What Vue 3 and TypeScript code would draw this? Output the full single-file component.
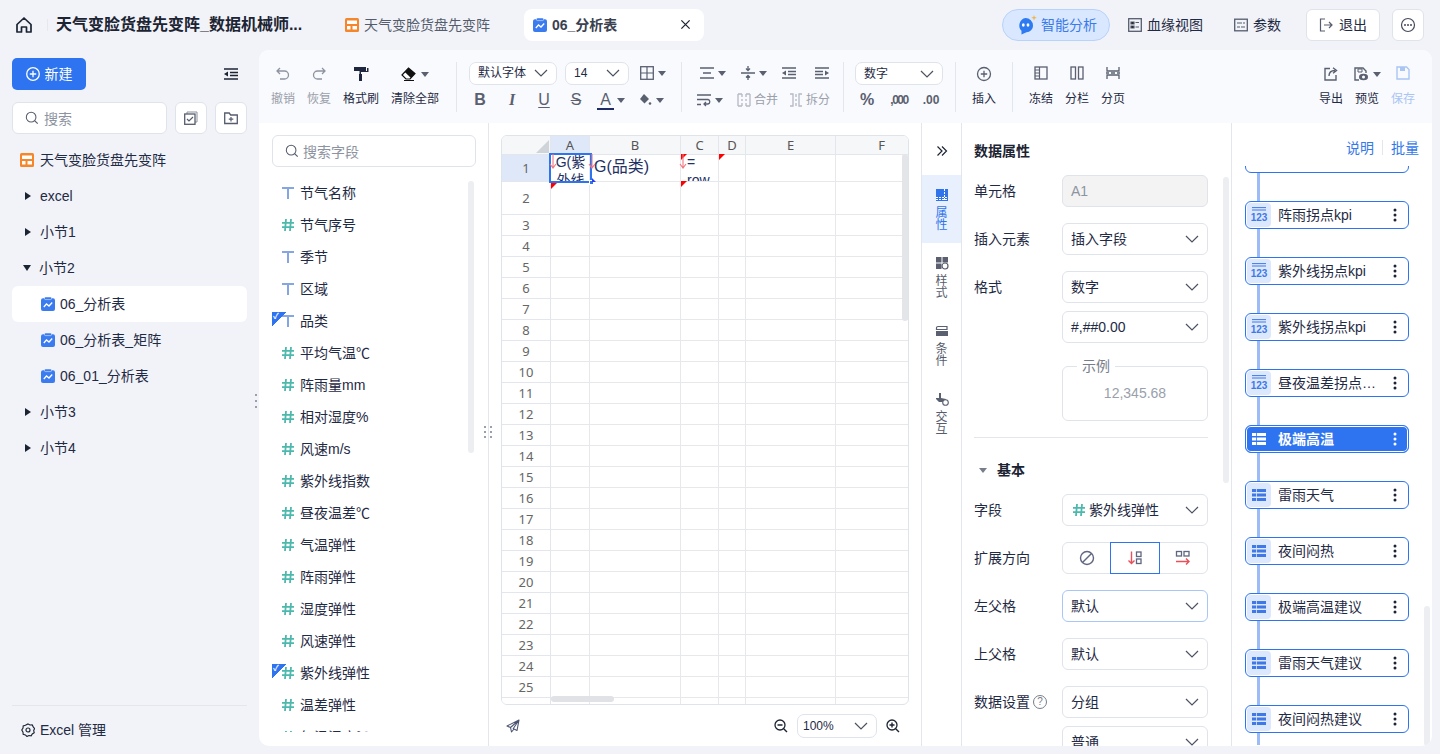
<template>
  <div class="page">
    <!-- hidden icon sprite -->
    <svg class="sprite" aria-hidden="true">
      <symbol id="i-chev" viewBox="0 0 16 16"><path d="M2 5l6 6 6-6" fill="none" stroke="currentColor" stroke-width="1.200" /></symbol>
      <symbol id="i-search" viewBox="0 0 16 16"><circle cx="7" cy="7" r="5.500" fill="none" stroke="currentColor" stroke-width="1.200" /><path d="M11 11l3.500 3.500" stroke="currentColor" stroke-width="1.400" /></symbol>
      <symbol id="i-dash" viewBox="0 0 14 14"><rect width="14" height="14" rx="1.500" fill="#f5862a" /><path d="M2 2.500h10v3.500H2zM2 8h3.500v3.500H2zM7.500 8H12v3.500H7.500z" fill="#fff" /></symbol>
      <symbol id="i-report" viewBox="0 0 14 14"><rect x="0" y="1.200" width="14" height="12.800" rx="2" fill="#3a7bf0" /><rect x="3.500" y="0" width="7" height="2.600" rx="1" fill="#3a7bf0" stroke="#fff" stroke-width=".5" /><path d="M2.800 10l2.700-3 2.500 2 3.200-3.500" fill="none" stroke="#fff" stroke-width="1.300" /></symbol>
      <symbol id="i-table" viewBox="0 0 16 16"><path d="M1 2h14v3H1zM1 6.500h14v3H1zM1 11h14v3H1z" fill="currentColor" /><path d="M5.500 2v12" stroke="var(--gap)" stroke-width=".8" /></symbol>
      <symbol id="i-cal" viewBox="0 0 14 4"><path d="M0 .6h14M0 3h14" stroke="currentColor" stroke-width="1" /></symbol>
      <symbol id="i-num" viewBox="0 0 12 12"><path d="M4 0L3 12M9 0L8 12M0 3.800h12M0 8.200h12" stroke="#4db8ac" stroke-width="1.800" fill="none" /></symbol>
      <symbol id="i-text" viewBox="0 0 12 12"><path d="M0 1h12M6 1v11" stroke="#86a5e3" stroke-width="2" fill="none" /></symbol>
    </svg>

    <header class="topbar">
      <svg class="home" viewBox="0 0 18 18"><path d="M2 8.500L9 2l7 6.500V16h-4.500v-5h-5v5H2z" fill="none" stroke="#1c2433" stroke-width="1.700" stroke-linejoin="round" /></svg>
      <span class="top-sep"></span>
      <div class="doc-title">天气变脸货盘先变阵_数据机械师...</div>
      <div class="tab">
        <svg class="ic14"><use href="#i-dash" /></svg>
        <span>天气变脸货盘先变阵</span>
      </div>
      <div class="tab tab-on">
        <svg class="ic14"><use href="#i-report" /></svg>
        <b>06_分析表</b>
        <svg class="tab-x" viewBox="0 0 12 12"><path d="M1.500 1.500l9 9M10.500 1.500l-9 9" stroke="#1c2433" stroke-width="1.400" /></svg>
      </div>
      <div class="top-right">
        <div class="ai-pill">
          <svg class="ai-ic" viewBox="0 0 20 20"><path d="M8.500 3a7.500 7.500 0 0 1 7.500 7.500c0 3.800-3 6.700-6.500 6.700L4.500 19.500v-3.800A7.500 7.500 0 0 1 8.500 3z" fill="#2e7af0" /><ellipse cx="6.300" cy="10" rx="1.400" ry="1.700" fill="#fff" /><ellipse cx="11" cy="10" rx="1.400" ry="1.700" fill="#fff" /><path d="M17 0l.7 2L19.800 2.800l-2.100.7L17 5.600l-.7-2.100-2.100-.7 2.100-.8z" fill="#f5b342" /></svg>
          <span>智能分析</span>
        </div>
        <div class="top-link link-a">
          <svg class="ic14" viewBox="0 0 14 14"><rect x=".7" y=".7" width="12.600" height="12.600" fill="none" stroke="#555c6c" stroke-width="1.300" /><path d="M3 4h3v2H3zM3 8h3v2H3zM7.500 4.500H11M7.500 9H11" stroke="#555c6c" stroke-width="1.200" /></svg>
          <span>血缘视图</span>
        </div>
        <div class="top-link link-b">
          <svg class="ic14" viewBox="0 0 14 14"><rect x=".7" y="1.200" width="12.600" height="11.600" fill="none" stroke="#555c6c" stroke-width="1.300" /><path d="M3 5h5M3 9h3M9 5h2M7 9h4" stroke="#555c6c" stroke-width="1.200" /></svg>
          <span>参数</span>
        </div>
        <button class="exit">
          <svg class="ic14" viewBox="0 0 14 14"><path d="M6 1H1.500v12H6M5 7h8M10 4l3 3-3 3" fill="none" stroke="#555c6c" stroke-width="1.200" /></svg>
          退出
        </button>
        <button class="more">
          <svg viewBox="0 0 16 16" class="ic16"><circle cx="8" cy="8" r="6.500" fill="none" stroke="#444b5a" stroke-width="1.200" /><circle cx="5" cy="8" r="1" fill="#444b5a" /><circle cx="8" cy="8" r="1" fill="#444b5a" /><circle cx="11" cy="8" r="1" fill="#444b5a" /></svg>
        </button>
      </div>
    </header>

    <div class="body">
      <aside class="side">
        <div class="side-head">
          <button class="new-btn">
            <svg viewBox="1 1 14 14" class="ic14"><circle cx="8" cy="8" r="6.300" fill="none" stroke="#fff" stroke-width="1.300" /><path d="M8 4.800v6.400M4.800 8h6.400" stroke="#fff" stroke-width="1.300" /></svg>
            新建
          </button>
          <svg class="collapse" viewBox="0 0 14 12"><path d="M0 1h14M6 4.500h8M6 7.500h8M0 11h14" stroke="#1c2433" stroke-width="1.400" /><path d="M4 3.500v5L0 6z" fill="#1c2433" /></svg>
        </div>
        <div class="side-search">
          <div class="search-box">
            <svg class="ic14 grey"><use href="#i-search" /></svg>
            <span>搜索</span>
          </div>
          <button class="square">
            <svg viewBox="0 0 14 14" class="ic14"><path d="M3 3V1h10v10h-2" fill="none" stroke="#8a909c" stroke-width="1" /><rect x=".7" y="3" width="10.300" height="10.300" fill="none" stroke="#555c6c" stroke-width="1.300" /><path d="M3 8l2 2 4-4" fill="none" stroke="#555c6c" stroke-width="1.200" /></svg>
          </button>
          <button class="square">
            <svg viewBox="0 0 14 14" class="ic14"><path d="M.7 2h4.500l1.500 2h6.600v8.500H.7z" fill="none" stroke="#555c6c" stroke-width="1.300" /><path d="M7 6v4.500M4.800 8.200h4.500" stroke="#555c6c" stroke-width="1.200" /></svg>
          </button>
        </div>
        <div class="tree">
          <div class="tree-row root">
            <svg class="ic14"><use href="#i-dash" /></svg>
            <span>天气变脸货盘先变阵</span>
          </div>
          <template v-for="row in navRows" :key="row.label">
            <div v-if="row.report" class="tree-row leaf" :class="{ active: row.active }">
              <svg class="ic14"><use href="#i-report" /></svg>
              <span>{{ row.label }}</span>
            </div>
            <div v-else class="tree-row folder">
              <i class="caret" :class="{ open: row.open }"></i>
              <span>{{ row.label }}</span>
            </div>
          </template>
        </div>
        <div class="side-foot">
          <svg viewBox="0 0 16 16" class="ic14"><path d="M8 1l2.200 1.300 2.600-.1 1.200 2.200 1.500 2-1 2.300.6 2.400-2.200 1.400-1.300 2.200-2.600-.4-2.200 1.100-1.800-1.800-2.500-.6-.2-2.600L.9 8l1.400-2.100.2-2.600L5 2.600z" fill="none" stroke="#1c2433" stroke-width="1.300" /><circle cx="8" cy="8" r="2.300" fill="none" stroke="#1c2433" stroke-width="1.300" /></svg>
          <span>Excel 管理</span>
        </div>
        <div class="side-grip"></div>
      </aside>

      <main class="card">
        <div class="toolbar">
          <div class="tb-group g-history">
            <div class="tool off">
              <svg class="ic16" viewBox="0 0 16 16"><path d="M5 2L2 5l3 3M2 5h7.500a4 4 0 0 1 0 8H5" fill="none" stroke="#8d93a0" stroke-width="1.300" /></svg>
              <span>撤销</span>
            </div>
            <div class="tool off">
              <svg class="ic16" viewBox="0 0 16 16"><path d="M11 2l3 3-3 3M14 5H6.500a4 4 0 0 0 0 8H11" fill="none" stroke="#8d93a0" stroke-width="1.300" /></svg>
              <span>恢复</span>
            </div>
            <div class="tool">
              <svg class="ic16" viewBox="0 0 16 16"><path d="M1 1h12v4H1zM14 2h1.500v4H8v2H6.500V5h7.500z" fill="#1f2740" /><path d="M6 8h3v7H6z" fill="#1f2740" /></svg>
              <span>格式刷</span>
            </div>
            <div class="tool wide">
              <div class="with-caret">
                <svg class="ic16" viewBox="0 0 16 16"><path d="M1 9l6.500-7L14 7.500 9 13H5z" fill="#fff" stroke="#111" stroke-width="1.200" /><path d="M7.500 2L14 7.500 10 12 3.800 6z" fill="#111" /><path d="M3 14.500h10" stroke="#111" stroke-width="1" /></svg>
                <i class="mini-caret"></i>
              </div>
              <span>清除全部</span>
            </div>
          </div>
          <span class="tb-sep"></span>

          <div class="tb-group g-font">
            <div class="fmt-top">
              <div class="select s-font"><span>默认字体</span><svg class="chev"><use href="#i-chev" /></svg></div>
              <div class="select s-size"><span>14</span><svg class="chev"><use href="#i-chev" /></svg></div>
              <div class="with-caret">
                <svg class="ic14" viewBox="0 0 14 14"><rect x=".7" y=".7" width="12.600" height="12.600" fill="none" stroke="#5a6070" stroke-width="1.300" /><path d="M7 1v12M1 7h12" stroke="#5a6070" stroke-width="1.200" /></svg>
                <i class="mini-caret"></i>
              </div>
            </div>
            <div class="fmt-bottom">
              <span class="glyph bold">B</span>
              <span class="glyph ital">I</span>
              <span class="glyph under">U</span>
              <span class="glyph strike">S</span>
              <div class="with-caret color-a"><span class="glyph a-line">A</span><i class="mini-caret"></i></div>
              <div class="with-caret color-f">
                <svg class="ic14" viewBox="0 0 14 14"><path d="M6 1l5 5-4.500 4.500L2 6z" fill="#5a6070" /><circle cx="12" cy="10.500" r="1.300" fill="#5a6070" /></svg>
                <i class="mini-caret"></i>
              </div>
            </div>
          </div>
          <span class="tb-sep"></span>

          <div class="tb-group g-align">
            <div class="fmt-top align-top">
              <div class="with-caret">
                <svg class="ic14" viewBox="0 0 14 12"><path d="M0 1h14M3 6h8M0 11h14" stroke="#5a6070" stroke-width="1.400" /></svg>
                <i class="mini-caret"></i>
              </div>
              <div class="with-caret">
                <svg class="ic14" viewBox="0 0 14 14"><path d="M0 7h14M7 0v4M7 10v4M5 2.500L7 4.500l2-2M5 11.500l2-2 2 2" fill="none" stroke="#5a6070" stroke-width="1.300" /></svg>
                <i class="mini-caret"></i>
              </div>
              <svg class="ic14" viewBox="0 0 14 12"><path d="M0 1h14M6 4.500h8M6 7.500h8M0 11h14" stroke="#5a6070" stroke-width="1.300" /><path d="M4 3.500v5L0 6z" fill="#5a6070" /></svg>
              <svg class="ic14" viewBox="0 0 14 12"><path d="M0 1h14M0 4.500h8M0 7.500h8M0 11h14" stroke="#5a6070" stroke-width="1.300" /><path d="M10 3.500v5L14 6z" fill="#5a6070" /></svg>
            </div>
            <div class="fmt-bottom align-bottom">
              <div class="with-caret">
                <svg class="ic14" viewBox="0 0 14 12"><path d="M0 1h14M0 5.500h11a2.300 2.300 0 0 1 0 4.500H7M9 8l-2 2 2 2M0 10.500h4" fill="none" stroke="#5a6070" stroke-width="1.300" /></svg>
                <i class="mini-caret"></i>
              </div>
              <div class="inline-tool">
                <svg class="ic14" viewBox="0 0 14 14"><path d="M1 1h4M9 1h4M1 13h4M9 13h4M1 1v12M13 1v12M5 1v3M5 6v2M5 10v3M9 1v3M9 6v2M9 10v3" fill="none" stroke="#b4b9c3" stroke-width="1.300" /></svg>
                <span>合并</span>
              </div>
              <div class="inline-tool">
                <svg class="ic14" viewBox="0 0 14 14"><path d="M1 1h3v12H1M13 1h-3v12h3M7 1v3M7 6v2M7 10v3" fill="none" stroke="#b4b9c3" stroke-width="1.300" /></svg>
                <span>拆分</span>
              </div>
            </div>
          </div>
          <span class="tb-sep"></span>

          <div class="tb-group g-num">
            <div class="select s-num"><span>数字</span><svg class="chev"><use href="#i-chev" /></svg></div>
            <div class="num-marks">
              <span class="mark big">%</span>
              <span class="mark tight-mark">,000</span>
              <span class="mark">.00</span>
            </div>
          </div>
          <span class="tb-sep"></span>

          <div class="tb-group g-insert">
            <div class="tool">
              <svg class="ic16" viewBox="0 0 16 16"><circle cx="8" cy="8" r="6.500" fill="none" stroke="#5a6070" stroke-width="1.300" /><path d="M8 4.800v6.400M4.800 8h6.400" stroke="#5a6070" stroke-width="1.300" /></svg>
              <span>插入</span>
            </div>
          </div>
          <span class="tb-sep"></span>

          <div class="tb-group g-view">
            <div class="tool">
              <svg class="ic14" viewBox="0 0 14 14"><rect x="1" y="1" width="12" height="12" fill="none" stroke="#5a6070" stroke-width="1.300" /><path d="M5.500 1v12M1 4h4M1 7h4M1 10h4" stroke="#5a6070" stroke-width="1.200" /></svg>
              <span>冻结</span>
            </div>
            <div class="tool">
              <svg class="ic14" viewBox="0 0 14 14"><rect x="1" y="1" width="4.500" height="12" fill="none" stroke="#5a6070" stroke-width="1.300" /><rect x="8.500" y="1" width="4.500" height="12" fill="none" stroke="#5a6070" stroke-width="1.300" /></svg>
              <span>分栏</span>
            </div>
            <div class="tool">
              <svg class="ic14" viewBox="0 0 14 14"><path d="M1 1v4h12V1M1 13V9h12v4M0 7h3M5 7h4M11 7h3" fill="none" stroke="#5a6070" stroke-width="1.300" /></svg>
              <span>分页</span>
            </div>
          </div>

          <div class="tb-group g-file">
            <div class="tool">
              <svg class="ic16" viewBox="0 0 16 16"><path d="M7 2.500H2v11.500h11V9" fill="none" stroke="#5a6070" stroke-width="1.400" /><path d="M6 10c0-3.500 2.500-5.500 6-5.500M10 1.800l3.500 2.700L10 7.200" fill="none" stroke="#5a6070" stroke-width="1.400" /></svg>
              <span>导出</span>
            </div>
            <div class="tool">
              <div class="with-caret small-gap">
                <svg class="ic16" viewBox="0 0 16 16"><path d="M6 14H2V2h8l3 3v2" fill="none" stroke="#5a6070" stroke-width="1.400" /><path d="M5 3h4v3H5z" fill="none" stroke="#5a6070" /><ellipse cx="10.500" cy="11" rx="4.500" ry="3.200" fill="#5a6070" /><circle cx="10.500" cy="11" r="1.500" fill="#fff" /></svg>
                <i class="mini-caret"></i>
              </div>
              <span>预览</span>
            </div>
            <div class="tool save">
              <svg class="ic14" viewBox="0 0 14 14"><path d="M1 1h9.500L13 3.500V13H1z" fill="none" stroke="#a9c5f5" stroke-width="1.400" /><path d="M4 1v4h5V1" fill="#a9c5f5" /></svg>
              <span>保存</span>
            </div>
          </div>
        </div>

        <div class="workspace">
          <section class="fields">
            <div class="field-search">
              <svg class="ic14 grey"><use href="#i-search" /></svg>
              <span>搜索字段</span>
            </div>
            <div class="field-list">
              <div v-for="f in fields" :key="f.name" class="field" :class="{ used: f.used }">
                <svg class="f-type"><use :href="f.type === 'T' ? '#i-text' : '#i-num'" /></svg>
                <span class="f-name">{{ f.name }}</span>
              </div>
              <div class="f-thumb"></div>
            </div>
            <div class="grip"></div>
          </section>

          <section class="sheet-wrap">
            <div class="sheet">
              <div class="sheet-grid">
                <div class="corner"><i></i></div>
                <div
                  v-for="(c, i) in columns"
                  :key="c"
                  class="col-head"
                  :class="{ picked: i === 0 }"
                >
                  {{ c }}
                </div>
                <template v-for="r in rows" :key="r">
                  <div class="row-head" :class="{ picked: r === 1 }">{{ r }}</div>
                  <div v-for="c in columns" :key="c" class="cell"></div>
                </template>
              </div>

              <!-- cell contents painted over the grid -->
              <div class="over cell-a">G(紫外线</div>
              <div class="over cell-b">G(品类)</div>
              <div class="over cell-c">=<br />row</div>
              <div class="over select-box"><i></i></div>
              <i class="over blue-mark"></i>
              <i v-for="m in redMarks" :key="m" class="over red-mark" :class="m"></i>
              <svg v-for="a in arrows" :key="a" class="over arrow" :class="a" viewBox="0 0 8 15"><path d="M4 0v13.500M1 10l3 4 3-4" fill="none" stroke="#f3777f" stroke-width="1.100" /></svg>
              <div class="over v-thumb"></div>
              <div class="over h-thumb"></div>
            </div>
            <div class="sheet-foot">
              <svg class="ic14 send" viewBox="0 0 14 14"><path d="M13 1L1 7l3.500 1.500L5.500 13 8 10l3 1.500zM4.500 8.500L13 1 7 10" fill="none" stroke="#4b5573" stroke-width="1.100" stroke-linejoin="round" /></svg>
              <div class="zoom-tools">
                <svg class="ic14" viewBox="0 0 14 14"><circle cx="6" cy="6" r="5" fill="none" stroke="#1c2433" stroke-width="1.300" /><path d="M3.500 6h5M9.700 9.700L13 13" stroke="#1c2433" stroke-width="1.400" /></svg>
                <div class="select s-zoom"><span>100%</span><svg class="chev"><use href="#i-chev" /></svg></div>
                <svg class="ic14" viewBox="0 0 14 14"><circle cx="6" cy="6" r="5" fill="none" stroke="#1c2433" stroke-width="1.300" /><path d="M3.500 6h5M6 3.500v5M9.700 9.700L13 13" stroke="#1c2433" stroke-width="1.400" /></svg>
              </div>
            </div>
          </section>

          <nav class="rail">
            <svg class="expand" viewBox="0 0 12 12"><path d="M1.500 1.500L6 6l-4.500 4.500M6 1.500L10.500 6 6 10.500" fill="none" stroke="#1c2433" stroke-width="1.200" /></svg>
            <div class="rail-tab on">
              <svg class="ic14" viewBox="0 0 14 14"><rect x="1" y="1" width="12" height="12" fill="#2f74ea" /><path d="M1 9.500h12M9.500 1v12M1 11.500h12" stroke="#fff" stroke-width="1" stroke-dasharray="2 1" /></svg>
              <span>属性</span>
            </div>
            <div class="rail-tab">
              <svg class="ic14" viewBox="0 0 14 14"><rect x="1" y="1" width="5.500" height="5.500" fill="#5a6070" /><rect x="7.500" y="1" width="5.500" height="5.500" fill="#5a6070" /><rect x="1" y="7.500" width="5.500" height="5.500" fill="#5a6070" /><circle cx="10" cy="10" r="3" fill="none" stroke="#5a6070" stroke-width="1.200" /></svg>
              <span>样式</span>
            </div>
            <div class="rail-tab">
              <svg class="ic14" viewBox="0 0 14 14"><path d="M3 2.500h9v3H1.500V4a1.500 1.500 0 0 1 1.500-1.500z" fill="none" stroke="#5a6070" stroke-width="1.200" /><rect x="1" y="7" width="12" height="5" fill="#5a6070" /></svg>
              <span>条件</span>
            </div>
            <div class="rail-tab">
              <svg class="ic14" viewBox="0 0 14 14"><path d="M4 1h2v5l5 1v3H4L1 7V6h3z" fill="#5a6070" /><circle cx="10.500" cy="10.500" r="2.800" fill="#fff" stroke="#5a6070" stroke-width="1.100" /></svg>
              <span>交互</span>
            </div>
          </nav>

          <section class="props">
            <div class="props-title">数据属性</div>
            <div class="prop">
              <label>单元格</label>
              <div class="ctl ctl-off">A1</div>
            </div>
            <div class="prop">
              <label>插入元素</label>
              <div class="ctl">插入字段<svg class="chev"><use href="#i-chev" /></svg></div>
            </div>
            <div class="prop">
              <label>格式</label>
              <div class="ctl">数字<svg class="chev"><use href="#i-chev" /></svg></div>
            </div>
            <div class="prop tight">
              <label></label>
              <div class="ctl">#,##0.00<svg class="chev"><use href="#i-chev" /></svg></div>
            </div>
            <div class="prop sample-row">
              <label></label>
              <fieldset class="sample">
                <legend>示例</legend>
                <span>12,345.68</span>
              </fieldset>
            </div>
            <div class="props-rule"></div>
            <div class="section-head"><i class="down"></i>基本</div>
            <div class="prop">
              <label>字段</label>
              <div class="ctl"><span class="ctl-field"><svg class="f-type"><use href="#i-num" /></svg>紫外线弹性</span><svg class="chev"><use href="#i-chev" /></svg></div>
            </div>
            <div class="prop">
              <label>扩展方向</label>
              <div class="seg">
                <div class="seg-item">
                  <svg class="ic16" viewBox="0 0 16 16"><circle cx="8" cy="8" r="6.500" fill="none" stroke="#5f6680" stroke-width="1.400" /><path d="M3.500 12.500l9-9" stroke="#5f6680" stroke-width="1.400" /></svg>
                </div>
                <div class="seg-item on">
                  <svg class="ic16" viewBox="0 0 16 16"><path d="M4.500 1.500v12M1.500 10.500l3 3 3-3" fill="none" stroke="#e9505a" stroke-width="1.400" /><rect x="9.500" y="2" width="4.500" height="4.500" fill="none" stroke="#5f6680" stroke-width="1.300" /><rect x="9.500" y="9" width="4.500" height="4.500" fill="none" stroke="#5f6680" stroke-width="1.300" /></svg>
                </div>
                <div class="seg-item">
                  <svg class="ic16" viewBox="0 0 16 16"><rect x="1.500" y="1.500" width="5" height="4.500" fill="none" stroke="#5f6680" stroke-width="1.300" /><rect x="9" y="1.500" width="5" height="4.500" fill="none" stroke="#5f6680" stroke-width="1.300" /><path d="M1 11.500h13M11 8.500l3 3-3 3" fill="none" stroke="#e9505a" stroke-width="1.400" /></svg>
                </div>
              </div>
            </div>
            <div class="prop">
              <label>左父格</label>
              <div class="ctl ctl-focus">默认<svg class="chev"><use href="#i-chev" /></svg></div>
            </div>
            <div class="prop">
              <label>上父格</label>
              <div class="ctl">默认<svg class="chev"><use href="#i-chev" /></svg></div>
            </div>
            <div class="prop">
              <label>数据设置<span class="help">?</span></label>
              <div class="ctl">分组<svg class="chev"><use href="#i-chev" /></svg></div>
            </div>
            <div class="prop tight">
              <label></label>
              <div class="ctl">普通<svg class="chev"><use href="#i-chev" /></svg></div>
            </div>
            <div class="props-thumb"></div>
          </section>

          <section class="outline">
            <div class="outline-head">
              <a>说明</a>
              <span></span>
              <a>批量</a>
            </div>
            <div class="outline-list">
              <div class="stem"></div>
              <div class="node node-cut"></div>
              <div
                v-for="n in nodes"
                :key="n.id"
                class="node"
                :class="{ current: n.current }"
              >
                <div class="node-ic">
                  <template v-if="n.kind === 'kpi'">
                    <svg class="cal"><use href="#i-cal" /></svg>
                    <b>123</b>
                  </template>
                  <svg v-else class="ic16"><use href="#i-table" /></svg>
                </div>
                <span class="node-name">{{ n.label }}</span>
                <svg class="dots" viewBox="0 0 4 14"><circle cx="2" cy="2" r="1.500" /><circle cx="2" cy="7" r="1.500" /><circle cx="2" cy="12" r="1.500" /></svg>
              </div>
            </div>
            <div class="outline-thumb"></div>
          </section>
        </div>
      </main>
    </div>
  </div>
</template>

<script setup lang="ts">
interface NavRow {
  label: string
  report?: boolean
  open?: boolean
  active?: boolean
}

interface Field {
  name: string
  type: 'T' | '#'
  used?: boolean
}

interface OutlineNode {
  id: number
  label: string
  kind: 'kpi' | 'table'
  current?: boolean
}

const navRows: NavRow[] = [
  { label: 'excel' },
  { label: '小节1' },
  { label: '小节2', open: true },
  { label: '06_分析表', report: true, active: true },
  { label: '06_分析表_矩阵', report: true },
  { label: '06_01_分析表', report: true },
  { label: '小节3' },
  { label: '小节4' },
]

const fields: Field[] = [
  { name: '节气名称', type: 'T' },
  { name: '节气序号', type: '#' },
  { name: '季节', type: 'T' },
  { name: '区域', type: 'T' },
  { name: '品类', type: 'T', used: true },
  { name: '平均气温℃', type: '#' },
  { name: '阵雨量mm', type: '#' },
  { name: '相对湿度%', type: '#' },
  { name: '风速m/s', type: '#' },
  { name: '紫外线指数', type: '#' },
  { name: '昼夜温差℃', type: '#' },
  { name: '气温弹性', type: '#' },
  { name: '阵雨弹性', type: '#' },
  { name: '湿度弹性', type: '#' },
  { name: '风速弹性', type: '#' },
  { name: '紫外线弹性', type: '#', used: true },
  { name: '温差弹性', type: '#' },
  { name: '气温湿度℃', type: '#' },
]

const columns = ['A', 'B', 'C', 'D', 'E', 'F']
const rows = Array.from({ length: 26 }, (_, i) => i + 1)
const redMarks = ['m1', 'm2', 'm3', 'm4']
const arrows = ['ar-a', 'ar-b', 'ar-c']

const nodes: OutlineNode[] = [
  { id: 1, label: '阵雨拐点kpi', kind: 'kpi' },
  { id: 2, label: '紫外线拐点kpi', kind: 'kpi' },
  { id: 3, label: '紫外线拐点kpi', kind: 'kpi' },
  { id: 4, label: '昼夜温差拐点kpi', kind: 'kpi' },
  { id: 5, label: '极端高温', kind: 'table', current: true },
  { id: 6, label: '雷雨天气', kind: 'table' },
  { id: 7, label: '夜间闷热', kind: 'table' },
  { id: 8, label: '极端高温建议', kind: 'table' },
  { id: 9, label: '雷雨天气建议', kind: 'table' },
  { id: 10, label: '夜间闷热建议', kind: 'table' },
]
</script>

<style>
html,
body {
  margin: 0;
  overflow: hidden;
}
</style>

<style scoped>
* {
  box-sizing: border-box;
}

.page {
  width: 1440px;
  height: 754px;
  background: #f1f3f8;
  color: #1f2a44;
  font: 14px/20px "Liberation Sans", "Noto Sans CJK SC", sans-serif;
  overflow: hidden;
}

.sprite {
  width: 0;
  height: 0;
  position: absolute;
}

.ic14 { width: 14px; height: 14px; flex: none; }
.ic16 { width: 16px; height: 16px; flex: none; }
.grey { color: #555c6c; }
.chev { width: 16px; height: 16px; color: #4b5262; flex: none; }

/* top bar */
.topbar {
  height: 50px;
  display: flex;
  align-items: center;
  padding-left: 15px;
  padding-bottom: 1px;
}

.home { width: 18px; height: 18px; }
.top-sep { width: 1px; height: 12px; background: #e6e8ee; margin: 0 8px 0 14px; }

.doc-title {
  width: 250px;
  font-size: 16px;
  font-weight: 700;
  color: #1c2433;
  white-space: nowrap;
}

.tab {
  display: flex;
  align-items: center;
  gap: 5px;
  margin-left: 39px;
  color: #555c6c;
}

.tab-on {
  width: 180px;
  height: 32px;
  margin-left: 34px;
  padding: 0 13px 0 9px;
  background: #fff;
  border-radius: 8px;
  color: #3a4150;
}

.tab-x { width: 11px; height: 11px; margin-left: auto; }

.top-right {
  margin-left: auto;
  display: flex;
  align-items: center;
  padding-right: 16px;
}

.ai-pill {
  width: 108px;
  height: 32px;
  display: flex;
  align-items: center;
  gap: 4px;
  padding-left: 14px;
  background: #d9e8ff;
  border: 1px solid #b8d2fb;
  border-radius: 16px;
  color: #3a7bea;
}

.ai-ic { width: 20px; height: 20px; flex: none; }

.top-link {
  display: flex;
  align-items: center;
  gap: 5px;
  color: #1f2a44;
}

.link-a { margin-left: 18px; }
.link-b { margin-left: 31px; }

button {
  font: inherit;
  color: inherit;
  cursor: pointer;
}

.exit {
  width: 74px;
  height: 32px;
  margin-left: 25px;
  display: flex;
  align-items: center;
  justify-content: center;
  gap: 6px;
  background: #fff;
  border: 1px solid #dfe3ea;
  border-radius: 6px;
  padding: 0;
}

.more {
  width: 32px;
  height: 32px;
  margin-left: 12px;
  display: flex;
  align-items: center;
  justify-content: center;
  background: #fff;
  border: 1px solid #dfe3ea;
  border-radius: 6px;
  padding: 0;
}

.body {
  display: flex;
  align-items: flex-start;
  height: 704px;
}

/* left nav */
.side {
  width: 259px;
  height: 704px;
  flex: none;
  padding: 8px 12px 0;
  display: flex;
  flex-direction: column;
  position: relative;
}

.side-head {
  display: flex;
  justify-content: space-between;
  align-items: center;
}

.new-btn {
  width: 74px;
  height: 32px;
  display: flex;
  align-items: center;
  justify-content: center;
  gap: 5px;
  background: #2e74f0;
  color: #fff;
  border: 0;
  border-radius: 5px;
  padding: 0;
}

.collapse { width: 14px; height: 12px; margin-right: 9px; }

.side-search {
  display: flex;
  gap: 8px;
  margin-top: 12px;
}

.search-box {
  width: 155px;
  height: 32px;
  display: flex;
  align-items: center;
  gap: 5px;
  padding-left: 12px;
  background: #fff;
  border: 1px solid #dfe3ea;
  border-radius: 6px;
  color: #8d93a0;
}

.search-box span,
.field-search span {
  margin-top: 2px;
}

.square {
  width: 32px;
  height: 32px;
  display: flex;
  align-items: center;
  justify-content: center;
  background: #fff;
  border: 1px solid #dfe3ea;
  border-radius: 6px;
  padding: 0;
}

.tree {
  margin-top: 8px;
  flex: 1;
}

.tree-row {
  height: 36px;
  display: flex;
  align-items: center;
  padding-left: 8px;
  white-space: nowrap;
}

.root { gap: 6px; }
.folder { gap: 9px; padding-left: 11px; }

.leaf {
  gap: 5px;
  padding-left: 29px;
  border-radius: 6px;
}

.leaf.active { background: #fff; }

.caret {
  width: 0;
  height: 0;
  border-left: 6px solid #1c2433;
  border-top: 4.5px solid transparent;
  border-bottom: 4.5px solid transparent;
  margin-left: 2px;
}

.caret.open {
  margin-left: 0;
  border-left: 4.5px solid transparent;
  border-right: 4.5px solid transparent;
  border-top: 6px solid #1c2433;
  border-bottom: 0;
  margin-right: -1px;
}

.side-foot {
  height: 49px;
  flex: none;
  border-top: 1px solid #e3e6ec;
  display: flex;
  align-items: center;
  gap: 5px;
  padding: 0 0 0 9px;
}

.side-grip {
  position: absolute;
  right: 2px;
  top: 344px;
  width: 2px;
  height: 14px;
  background: repeating-linear-gradient(#9aa0ab 0 2px, transparent 2px 6px);
}

/* main card */
.card {
  width: 1173px;
  height: 696px;
  background: #fff;
  border-radius: 10px;
  overflow: hidden;
  display: flex;
  flex-direction: column;
}

.toolbar {
  height: 73px;
  flex: none;
  background: #f9fafd;
  display: flex;
  align-items: flex-start;
  padding: 12px 0 0 0;
}

.tb-group { height: 49px; }
.tb-sep { width: 1px; height: 50px; background: #e3e6ec; flex: none; }

.tool {
  display: flex;
  flex-direction: column;
  align-items: center;
  justify-content: space-between;
  height: 45px;
  width: 36px;
  font-size: 12px;
  line-height: 16px;
  white-space: nowrap;
  padding-top: 4px;
  color: #1f2a44;
}

.tool.off { color: #9a9fab; }
.tool.wide { width: 54px; }
.tool.save { color: #a9c5f5; }

.with-caret {
  display: flex;
  align-items: center;
  gap: 4px;
}

.mini-caret {
  width: 0;
  height: 0;
  border-left: 4px solid transparent;
  border-right: 4px solid transparent;
  border-top: 5px solid #5a6070;
}

.g-history {
  display: flex;
  width: 197px;
  padding-left: 6px;
}

.g-history .tool:nth-child(3) { margin-left: 6px; }
.g-history .tool:nth-child(4) { width: 60px; margin-left: 6px; }

.g-font {
  width: 224px;
  padding-left: 12px;
  display: flex;
  flex-direction: column;
  justify-content: space-between;
}

.fmt-top, .fmt-bottom {
  display: flex;
  align-items: center;
  height: 22px;
}

.fmt-top { gap: 8px; }

.select {
  height: 23px;
  display: flex;
  align-items: center;
  justify-content: space-between;
  padding: 0 7px 0 8px;
  background: #fff;
  border: 1px solid #dfe3ea;
  border-radius: 7px;
  font-size: 12px;
  white-space: nowrap;
}

.s-font { width: 88px; }
.s-size { width: 64px; }
.fmt-top .with-caret { margin-left: 3px; }

.fmt-bottom { margin-left: -5px; }

.glyph {
  width: 32px;
  text-align: center;
  font-size: 16px;
  line-height: 20px;
  color: #5a6070;
}

.bold { font-weight: 700; }
.ital { font-style: italic; font-family: "Liberation Serif", serif; font-weight: 700; }
.under { text-decoration: underline; text-underline-offset: 2px; }
.strike { text-decoration: line-through; }

.color-a { margin-left: 5px; gap: 3px; }

.a-line {
  width: 17px;
  border-bottom: 2px solid #1f2a64;
  line-height: 17px;
}

.color-f { margin-left: 13px; }

.g-align {
  width: 161px;
  padding-left: 15px;
  display: flex;
  flex-direction: column;
  justify-content: space-between;
}

.align-top { gap: 0; }
.align-top > :nth-child(2) { margin-left: 15px; }
.align-top > :nth-child(3) { margin-left: 15px; }
.align-top > :nth-child(4) { margin-left: 19px; }

.align-bottom { margin-left: 0; }

.inline-tool {
  display: flex;
  align-items: center;
  gap: 3px;
  font-size: 12px;
  color: #9a9fab;
  white-space: nowrap;
}

.align-bottom > :nth-child(2) { margin-left: 14px; }
.align-bottom > :nth-child(3) { margin-left: 11px; }

.g-num {
  width: 111px;
  padding-left: 11px;
  display: flex;
  flex-direction: column;
  justify-content: space-between;
}

.s-num { width: 88px; }

.num-marks {
  display: flex;
  height: 22px;
  align-items: center;
  margin-left: -4px;
}

.mark {
  width: 32px;
  text-align: center;
  font-size: 12px;
  font-weight: 700;
  color: #5a6070;
}

.tight-mark { letter-spacing: -1.5px; }
.mark.big { font-size: 16px; }

.g-insert {
  width: 56px;
  display: flex;
  justify-content: center;
}

.g-view {
  display: flex;
  padding-left: 10px;
  margin-right: auto;
}

.g-file {
  display: flex;
  padding-right: 11px;
}

.workspace {
  flex: 1;
  min-height: 0;
  display: flex;
}

/* field list */
.fields {
  width: 230px;
  flex: none;
  border-right: 1px solid #e3e6ec;
  position: relative;
  padding-top: 12px;
}

.field-search {
  width: 204px;
  height: 32px;
  margin-left: 13px;
  display: flex;
  align-items: center;
  gap: 4px;
  padding-left: 12px;
  border: 1px solid #dfe3ea;
  border-radius: 6px;
  color: #8d93a0;
}

.field-list {
  height: 555px;
  margin-top: 10px;
  overflow: hidden;
  position: relative;
}

.field {
  height: 32px;
  display: flex;
  align-items: center;
  padding-left: 23px;
  position: relative;
}

.f-type {
  width: 12px;
  height: 12px;
  margin-right: 6px;
  flex: none;
}

.field.used::before {
  content: "✓";
  position: absolute;
  left: 13px;
  top: 7px;
  width: 14px;
  height: 14px;
  background: linear-gradient(135deg, #2e74f0 50%, transparent 50%);
  color: #fff;
  font-size: 8px;
  font-weight: 700;
  line-height: 9px;
  padding-left: 1px;
}

.f-thumb {
  position: absolute;
  left: 209px;
  top: 4px;
  width: 6px;
  height: 272px;
  background: #eceef2;
  border-radius: 3px;
}

.grip {
  position: absolute;
  right: -5px;
  top: 303px;
  width: 9px;
  height: 14px;
  background: repeating-linear-gradient(90deg, #9aa0ab 0 2px, transparent 2px 6px);
  mask: repeating-linear-gradient(#000 0 2px, transparent 2px 5px);
}

/* sheet */
.sheet-wrap {
  width: 433px;
  flex: none;
  padding: 12px 12px 0;
  border-right: 1px solid #e3e6ec;
}

.sheet {
  width: 408px;
  height: 570px;
  border: 1px solid #dfe3ea;
  border-radius: 6px;
  overflow: hidden;
  position: relative;
}

.sheet-grid {
  display: grid;
  grid-template-columns: 49px 39px 91px 38px 27px 90px 92px;
  grid-template-rows: 19px 27px 33px repeat(24, 21px);
  font-size: 13px;
  font-family: "Noto Sans", sans-serif;
}

.corner {
  background: #f6f7f9;
  position: relative;
  border-right: 1px solid #e3e6ec;
  border-bottom: 1px solid #e3e6ec;
}

.corner i {
  position: absolute;
  right: 1px;
  bottom: 1px;
  border-left: 13px solid transparent;
  border-bottom: 13px solid #cfd3da;
}

.col-head {
  background: #f6f7f9;
  border-right: 1px solid #e3e6ec;
  border-bottom: 1px solid #e3e6ec;
  text-align: center;
  line-height: 18px;
  color: #555;
}

.row-head {
  border-right: 1px solid #e3e6ec;
  border-bottom: 1px solid #e3e6ec;
  background: #fff;
  display: flex;
  align-items: center;
  justify-content: center;
  color: #666;
}

.picked { background: #dfe8f8; }

.cell {
  border-right: 1px solid #e6e8ec;
  border-bottom: 1px solid #e6e8ec;
}

.over { position: absolute; }

.cell-a {
  left: 49px;
  top: 17px;
  width: 39px;
  height: 28px;
  overflow: hidden;
  text-align: center;
  font-size: 14px;
  line-height: 18px;
  color: #223064;
}

.cell-b {
  left: 92px;
  top: 18px;
  font-size: 16px;
  line-height: 26px;
  color: #223064;
}

.cell-c {
  left: 180px;
  top: 17px;
  width: 36px;
  height: 28px;
  overflow: hidden;
  font-size: 14px;
  line-height: 18px;
  padding-left: 5px;
  color: #223064;
}

.select-box {
  left: 47px;
  top: 17px;
  width: 43px;
  height: 30px;
  border: 2px solid #2e74f0;
}

.select-box i {
  position: absolute;
  right: -4px;
  bottom: -4px;
  width: 5px;
  height: 5px;
  background: #2e74f0;
  border: 1px solid #fff;
}

.blue-mark {
  left: 90px;
  top: 42px;
  width: 0;
  height: 0;
  border-bottom: 4px solid #2e3cf0;
  border-right: 4px solid transparent;
}

.red-mark {
  width: 0;
  height: 0;
  border-top: 6px solid #f00;
  border-right: 6px solid transparent;
}

.m1 { left: 49px; top: 47px; }
.m2 { left: 179px; top: 18px; }
.m3 { left: 179px; top: 45px; }
.m4 { left: 217px; top: 18px; }

.arrow {
  width: 8px;
  height: 15px;
  top: 18px;
}

.ar-a { left: 47px; }
.ar-b { left: 86px; }
.ar-c { left: 177px; }

.v-thumb {
  left: 400px;
  top: 18px;
  width: 6px;
  height: 167px;
  background: #e3e5e9;
  border-radius: 3px;
}

.h-thumb {
  left: 49px;
  top: 560px;
  width: 63px;
  height: 6px;
  background: #e0e2e6;
  border-radius: 3px;
}

.sheet-foot {
  height: 40px;
  display: flex;
  align-items: center;
  justify-content: space-between;
  padding-top: 2px;
  padding-left: 5px;
}

.zoom-tools {
  display: flex;
  align-items: center;
  gap: 9px;
  margin-right: 9px;
}

.s-zoom {
  width: 80px;
  height: 24px;
  padding-left: 5px;
}

/* side rail */
.rail {
  width: 40px;
  flex: none;
  border-right: 1px solid #e3e6ec;
  display: flex;
  flex-direction: column;
  align-items: stretch;
}

.expand {
  width: 12px;
  height: 12px;
  margin: 22px 0 18px 14px;
}

.rail-tab {
  height: 68px;
  display: flex;
  flex-direction: column;
  align-items: center;
  padding-top: 13px;
  color: #555c6c;
}

.rail-tab span {
  width: 13px;
  font-size: 12px;
  line-height: 12px;
  margin-top: 5px;
  text-align: center;
}

.rail-tab.on { background: #e8f0fe; color: #2f74ea; }

/* property panel */
.props {
  width: 270px;
  flex: none;
  padding: 17px 23px 0 12px;
  border-right: 1px solid #e3e6ec;
  position: relative;
  overflow: hidden;
}

.props-title {
  font-weight: 700;
  line-height: 22px;
  color: #1c2433;
  margin-bottom: 13px;
}

.prop {
  display: flex;
  margin-bottom: 16px;
  white-space: nowrap;
}

.prop.tight { margin-top: -8px; }

.prop label {
  width: 88px;
  flex: none;
  line-height: 32px;
  display: flex;
  align-items: center;
}

.ctl {
  width: 147px;
  height: 32px;
  display: flex;
  align-items: center;
  justify-content: space-between;
  padding: 0 7px 0 8px;
  border: 1px solid #dfe3ea;
  border-radius: 6px;
}

.ctl-off {
  background: #f3f3f4;
  color: #8d93a0;
}

.ctl-focus { border-color: #a8c6f7; }

.ctl-field {
  display: flex;
  align-items: center;
}

.ctl-field .f-type { margin: 0 4px 0 2px; }

.sample-row {
  margin: -1px 0 0;
  height: 63px;
  align-items: flex-start;
}

.sample {
  width: 147px;
  height: 63px;
  margin: 0;
  padding: 0;
  border: 1px solid #dfe3ea;
  border-radius: 6px;
  color: #9a9fab;
}

.sample legend {
  margin-left: 14px;
  padding: 0 5px;
  line-height: 16px;
  color: #777d8a;
}

.sample span {
  display: block;
  margin-top: 9px;
  text-align: center;
}

.props-rule {
  height: 1px;
  background: #e3e6ec;
  margin-top: 16px;
}

.section-head {
  display: flex;
  align-items: center;
  font-weight: 700;
  line-height: 22px;
  margin: 21px 0 13px;
  color: #1c2433;
  gap: 10px;
}

.down {
  margin-left: 5px;
  border-left: 4px solid transparent;
  border-right: 4px solid transparent;
  border-top: 5px solid #777d8a;
}

.help {
  width: 14px;
  height: 14px;
  margin-left: 3px;
  border: 1px solid #777d8a;
  border-radius: 50%;
  font-size: 10px;
  line-height: 12px;
  text-align: center;
  color: #777d8a;
}

.seg {
  width: 147px;
  height: 32px;
  display: flex;
  border: 1px solid #dfe3ea;
  border-radius: 6px;
}

.seg-item {
  flex: 1;
  display: flex;
  align-items: center;
  justify-content: center;
}

.seg-item.on {
  margin: -1px 0;
  border: 1px solid #2e74f0;
}

.props-thumb {
  position: absolute;
  right: 2px;
  top: 54px;
  width: 6px;
  height: 306px;
  background: #eceef2;
  border-radius: 3px;
}

/* outline */
.outline {
  flex: 1;
  position: relative;
  overflow: hidden;
}

.outline-head {
  height: 43px;
  display: flex;
  justify-content: flex-end;
  align-items: center;
  padding: 6px 13px 0 0;
  color: #3478ea;
  gap: 8px;
}

.outline-head span {
  width: 1px;
  height: 15px;
  background: #e3e6ec;
}

.outline-list {
  height: 579px;
  position: relative;
  overflow: hidden;
  padding-left: 13px;
  display: flex;
  flex-direction: column;
  gap: 28px;
}

.stem {
  position: absolute;
  left: 25px;
  top: 0;
  bottom: 0;
  width: 3px;
  background: #9dbcf5;
}

.node {
  --gap: #dce8fe;
  width: 164px;
  height: 28px;
  flex: none;
  display: flex;
  align-items: center;
  position: relative;
  background: #fff;
  border: 1px solid #2e74f0;
  border-radius: 6px;
  padding: 1px;
  white-space: nowrap;
}

.node-cut { margin-top: -21px; }

.node-ic {
  width: 24px;
  height: 24px;
  flex: none;
  background: #dce8fe;
  border-radius: 4px;
  display: flex;
  flex-direction: column;
  align-items: center;
  justify-content: center;
  color: #4079e6;
  line-height: 10px;
}

.cal { width: 14px; height: 4px; margin-bottom: 1px; }

.node-ic b {
  font-size: 10px;
  line-height: 11px;
}

.node-name {
  margin-left: 7px;
  width: 98px;
  overflow: hidden;
  text-overflow: ellipsis;
}

.dots {
  width: 4px;
  height: 14px;
  margin-left: 17px;
  fill: #1c2433;
}

.node.current {
  --gap: #2e74f0;
  background: #2e74f0;
  box-shadow: inset 0 0 0 1px #fff;
  color: #fff;
  font-weight: 700;
}

.node.current .node-ic { background: transparent; color: #fff; }
.node.current .dots { fill: #fff; }

.outline-thumb {
  position: absolute;
  right: 2px;
  bottom: 0;
  width: 6px;
  height: 140px;
  background: #eceef2;
  border-radius: 3px;
}
</style>
